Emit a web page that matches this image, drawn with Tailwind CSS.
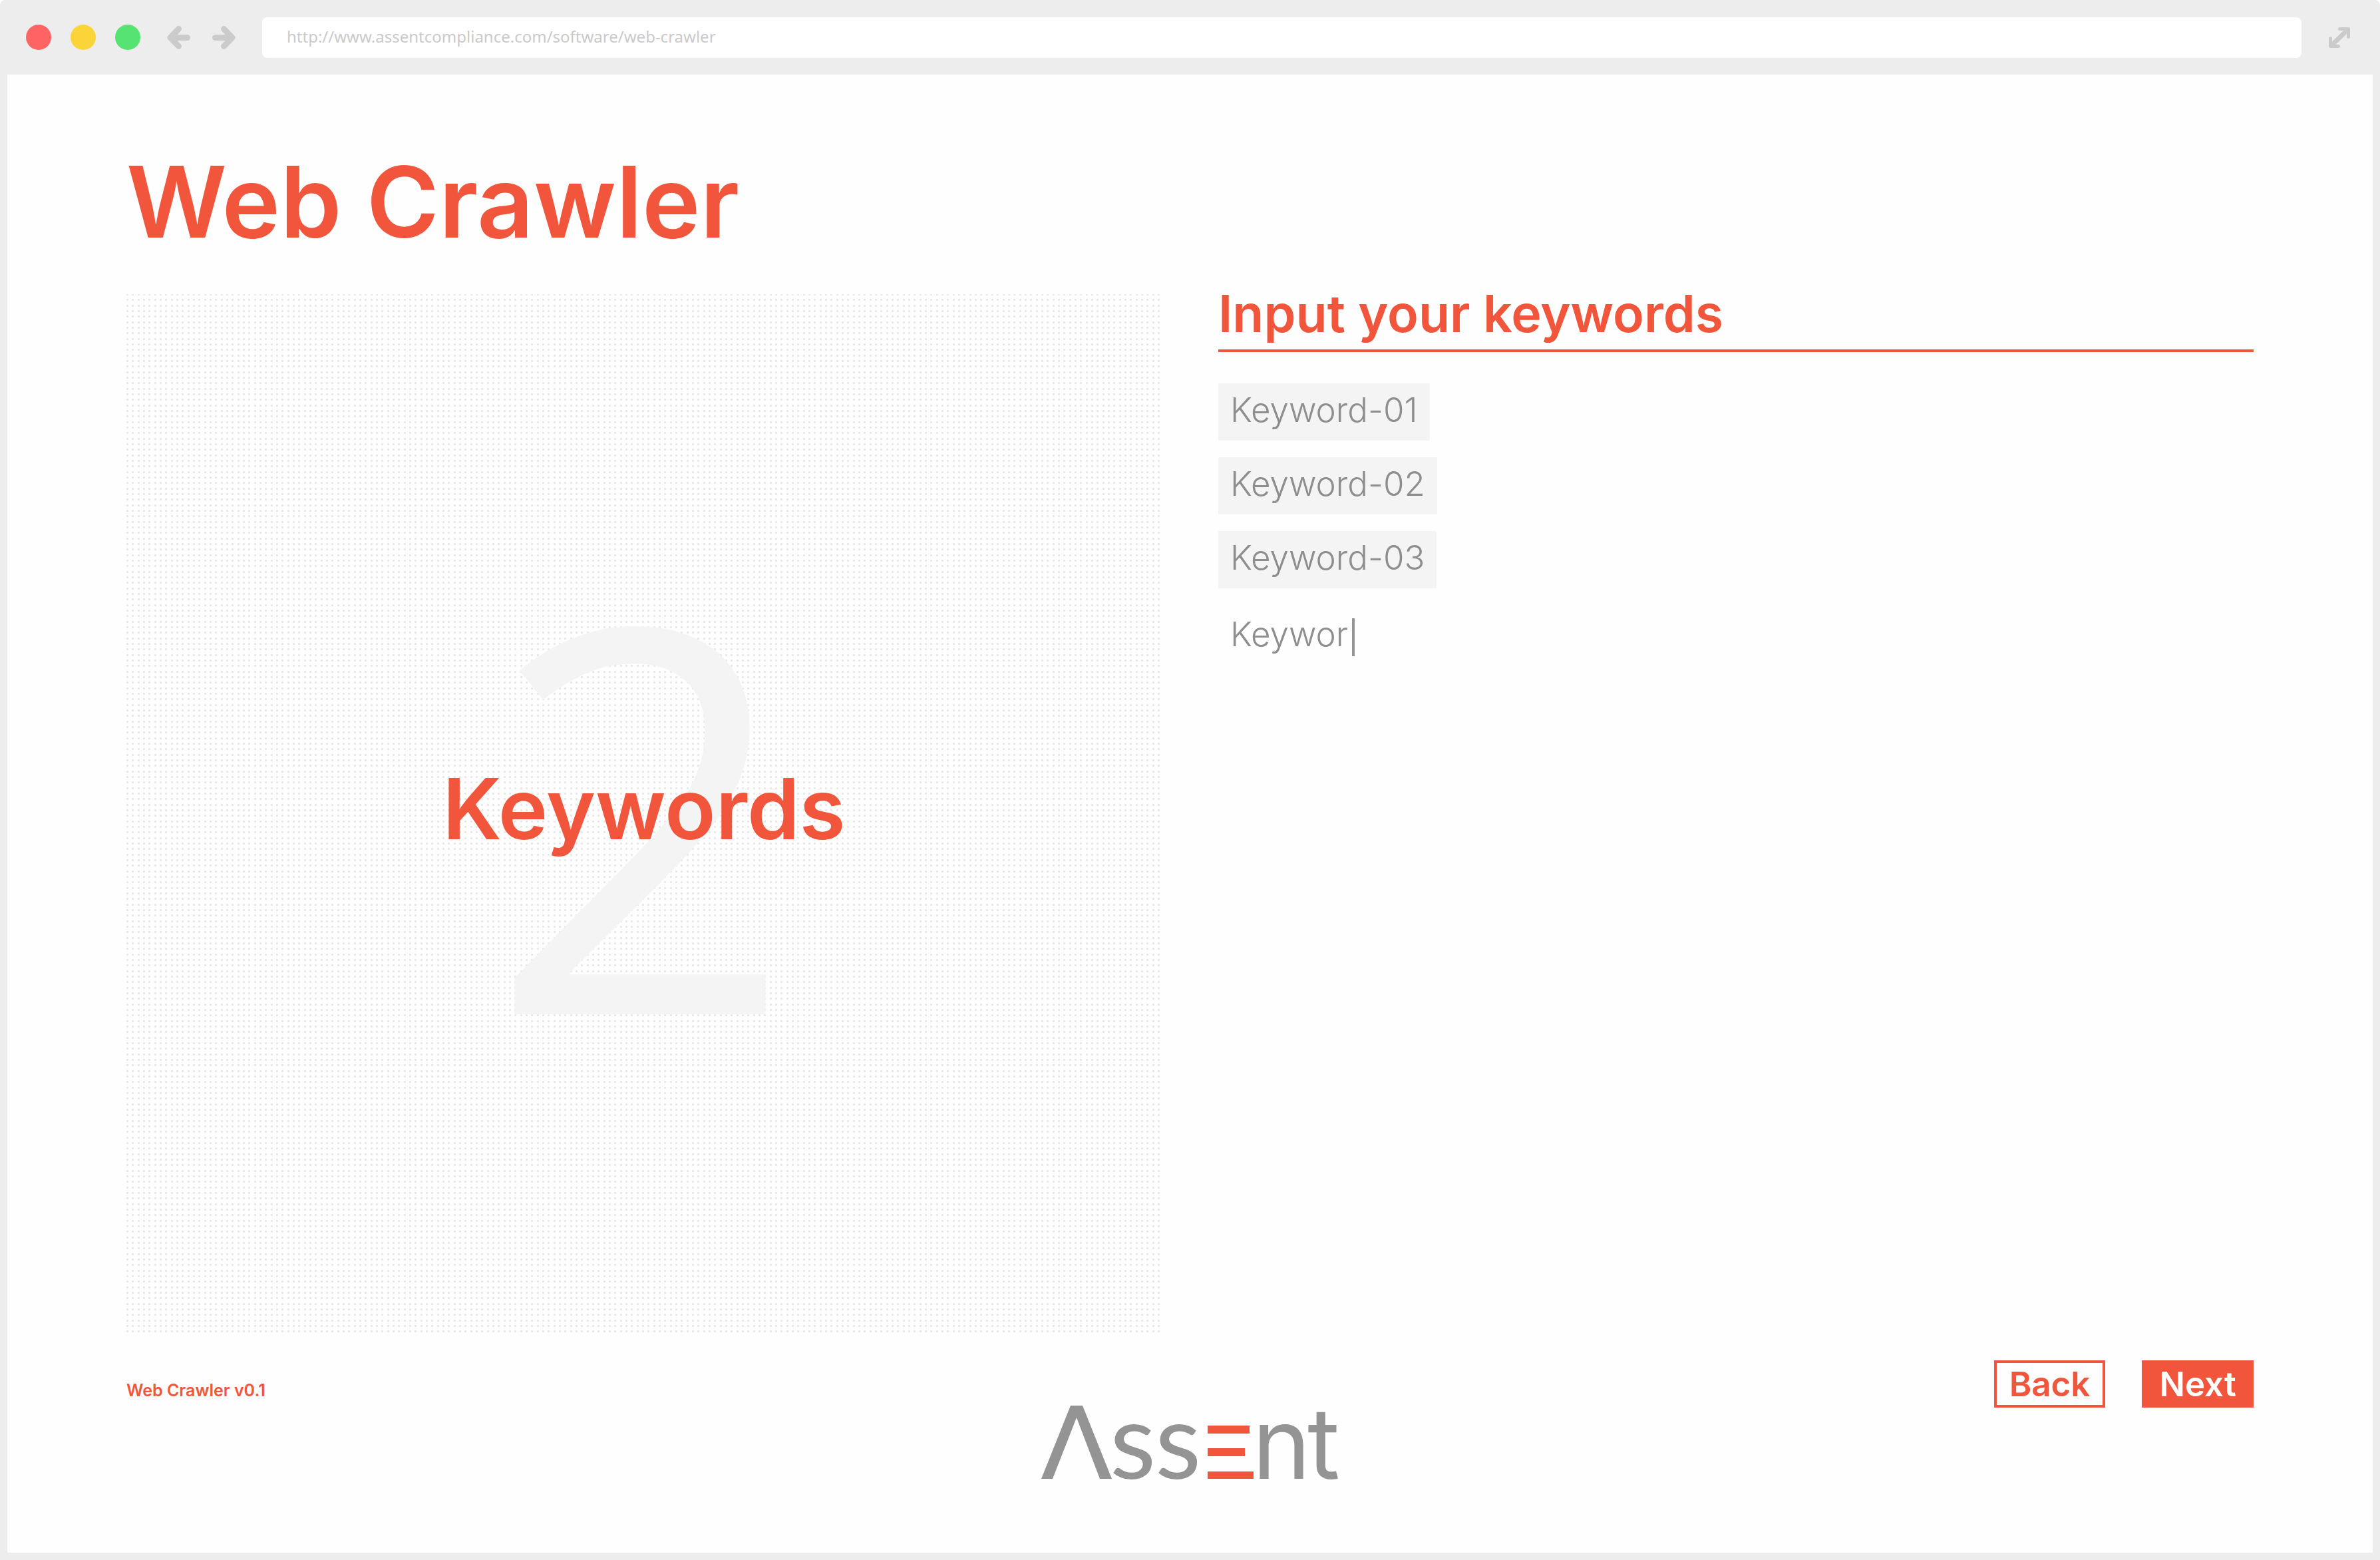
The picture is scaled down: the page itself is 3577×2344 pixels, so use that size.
<!DOCTYPE html>
<html lang="en">
<head>
<meta charset="utf-8">
<meta name="viewport" content="width=device-width, initial-scale=1">
<title>Web Crawler</title>
<script src="https://cdn.jsdelivr.net/npm/@tailwindcss/browser@4"></script>
</head>
<body class="bg-white font-['Inter',sans-serif]">
<div class="flex min-h-screen flex-col rounded-t-lg bg-[#ededed] px-[11px] pb-[11px]">

  <!-- Browser toolbar -->
  <header class="flex h-28 shrink-0 items-center pr-[34px] pl-7">
    <div class="flex gap-[29px]">
      <span class="size-[38px] rounded-full bg-[#ff6464]"></span>
      <span class="size-[38px] rounded-full bg-[#fbd43a]"></span>
      <span class="size-[38px] rounded-full bg-[#57e372]"></span>
    </div>
    <nav class="ml-10 flex gap-[33px]">
      <button type="button" aria-label="Go back">
        <svg class="block size-[35px]" viewBox="0 0 35 35" fill="none" stroke="#cbcbcb" stroke-width="9" stroke-linecap="round" stroke-linejoin="round"><path d="M17.500 4.500 5 17.500l12.500 13M6 17.500h24.500"/></svg>
      </button>
      <button type="button" aria-label="Go forward">
        <svg class="block size-[35px]" viewBox="0 0 35 35" fill="none" stroke="#cbcbcb" stroke-width="9" stroke-linecap="round" stroke-linejoin="round"><path d="M17.500 4.500 30 17.500l-12.500 13M29 17.500H4.500"/></svg>
      </button>
    </nav>
    <input type="text" aria-label="Address" value="http://www.assentcompliance.com/software/web-crawler" class="ml-10 h-[61px] min-w-0 flex-1 rounded-lg bg-white px-[37px] pb-[3px] font-['Noto_Sans',sans-serif] text-[24px] text-[#cacaca] outline-none">
    <button type="button" aria-label="Full screen" class="ml-[41px]">
      <svg class="block h-[31px] w-8" viewBox="0 0 32 31" fill="none" stroke="#cbcbcb" stroke-linecap="round" stroke-linejoin="round"><path stroke-width="5" d="M16.500 2.500h13v12M2.500 16.500v12h12"/><path stroke-width="7" d="M5 26.500 27.500 4.500"/></svg>
    </button>
  </header>

  <main class="flex flex-1 flex-col bg-[#fefefe] px-[179px] pt-[117px] pb-[109px]">
    <h1 class="text-[148px] leading-[150px] font-semibold text-[#f1553b]">Web Crawler</h1>

    <div class="mt-[63px] grid flex-1 grid-cols-2 gap-x-[85px]">
      <!-- Step panel -->
      <section class="grid">
        <svg class="col-start-1 row-start-1 size-full" aria-hidden="true">
          <defs>
            <pattern id="dots" y="-1" width="25" height="25" patternUnits="userSpaceOnUse">
              <path fill="#e9e9e9" d="M0 0h3v3H0zM8 0h3v3H8zM17 0h3v3h-3zM0 8h3v3H0zM8 8h3v3H8zM17 8h3v3h-3zM0 17h3v3H0zM8 17h3v3H8zM17 17h3v3h-3z"/>
            </pattern>
          </defs>
          <rect width="100%" height="100%" fill="url(#dots)"/>
        </svg>
        <div class="col-start-1 row-start-1 place-self-center pr-2 pb-5 font-['Open_Sans',sans-serif] text-[805px] leading-none text-[#f4f4f4]">2</div>
        <h2 class="col-start-1 row-start-1 place-self-center pb-4 text-[126px] leading-none font-semibold text-[#f1553b]">Keywords</h2>
      </section>

      <!-- Keyword entry -->
      <section>
        <h2 class="border-b-4 border-[#f1553b] pb-[25px] text-[77px] leading-[58px] font-semibold text-[#f1553b]"><label for="keyword">Input your keywords</label></h2>
        <ul class="mt-[47px] flex flex-col items-start gap-[25px] text-[51px] leading-[80px] font-light text-[#8e8e8e]">
          <li class="bg-[#f4f4f4] px-[18px] pb-[6px]">Keyword-01</li>
          <li class="bg-[#f4f4f4] px-[18px] pb-[6px]">Keyword-02</li>
          <li class="bg-[#f4f4f4] px-[18px] pb-[6px]">Keyword-03</li>
        </ul>
        <div class="mt-[29px] flex h-20 items-center pl-[18px] text-[51px] font-light text-[#8e8e8e]">
          <input id="keyword" type="text" value="Keywor" class="field-sizing-content h-20 leading-[80px] outline-none">
          <span class="mt-2 ml-[6px] h-[57px] w-1 bg-[#949494]"></span>
        </div>
      </section>
    </div>

    <footer class="mt-[41px] grid grid-cols-[1fr_auto_1fr] items-start">
      <p class="pt-[29px] text-[25px] leading-8 font-semibold text-[#f1553b]">Web Crawler v0.1</p>
      <svg class="mt-[68px] h-28 w-[447px] overflow-visible" viewBox="0 0 447 112" role="img" aria-label="Assent">
        <path fill="#949494" d="M0 110 44 0h18l44 110H88L53 18 17 110z"/>
        <text x="103 171" y="110" class="fill-[#949494] font-['Lato',sans-serif] text-[160px]">ss</text>
        <path fill="#f1553b" d="M250 30h63v12h-63zM250 64h56v12h-56zM250 99h69v11h-69z"/>
        <text x="317 400" y="110" class="fill-[#949494] text-[149px]">nt</text>
      </svg>
      <div class="flex justify-end gap-[55px] text-[51px] leading-none font-semibold">
        <button type="button" class="h-[71px] w-[167px] border-4 border-[#f1553b] text-[#f1553b]">Back</button>
        <button type="button" class="h-[71px] w-[168px] bg-[#f1553b] text-white">Next</button>
      </div>
    </footer>
  </main>
</div>
</body>
</html>
